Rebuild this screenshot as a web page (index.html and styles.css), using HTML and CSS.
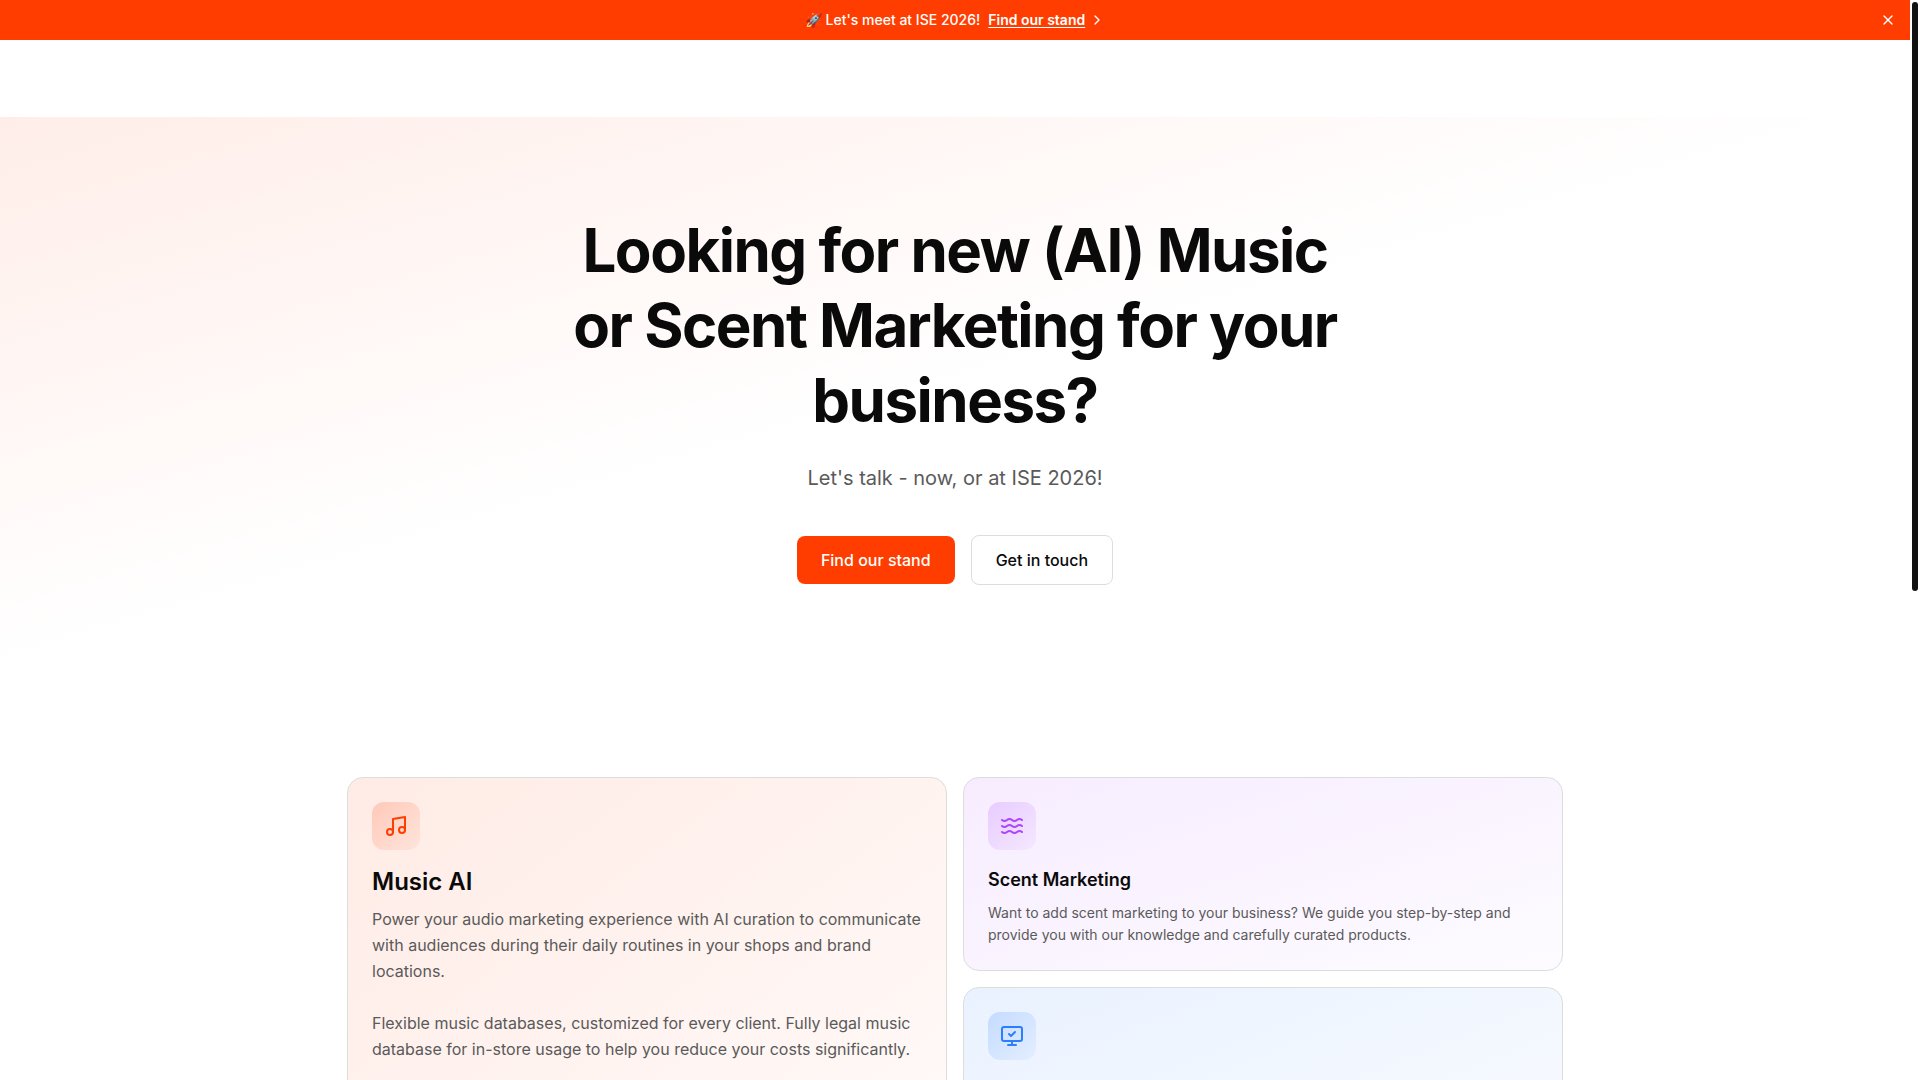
FILE: index.html
```html
<!DOCTYPE html>
<html lang="en">

<head>
    <meta charset="UTF-8">
    <meta name="viewport" content="width=device-width, initial-scale=1.0">
    <title>Music AI and Scent Marketing</title>
    <link rel="stylesheet" href="styles.css">
</head>

<body>
    <div class="page">
        <div class="banner">
            <p class="banner-text">
                <span>🚀 Let's meet at ISE 2026!</span>
                <a class="banner-link" href="#stand"><span class="banner-link-label">Find our stand</span><svg class="icon-small" viewBox="0 0 24 24" aria-hidden="true"><path d="m9 18 6-6-6-6" /></svg></a>
            </p>
            <button class="banner-close" type="button" aria-label="Close">
                <svg class="icon-small" viewBox="0 0 24 24" aria-hidden="true"><path d="M18 6 6 18" /><path d="m6 6 12 12" /></svg>
            </button>
        </div>

        <header class="header"></header>

        <main>
            <section class="hero">
                <h1 class="hero-title">Looking for new (AI) Music or Scent Marketing for your business?</h1>
                <p class="hero-text">Let's talk - now, or at ISE 2026!</p>
                <div class="hero-actions">
                    <a class="btn btn-primary" href="#stand">Find our stand</a>
                    <a class="btn btn-outline" href="#contact">Get in touch</a>
                </div>
            </section>

            <section class="services">
                <div class="container">
                    <article class="card card-large card-orange">
                        <div class="card-icon">
                            <svg class="icon" viewBox="0 0 24 24" aria-hidden="true">
                                <path d="M9 18V5l12-2v13" />
                                <circle cx="6" cy="18" r="3" />
                                <circle cx="18" cy="16" r="3" />
                            </svg>
                        </div>
                        <h2 class="card-title">Music AI</h2>
                        <div class="card-text">
                            <p>Power your audio marketing experience with AI curation to communicate with audiences during their daily routines in your shops and brand locations.</p>
                            <p>Flexible music databases, customized for every client. Fully legal music database for in-store usage to help you reduce your costs significantly.</p>
                        </div>
                    </article>

                    <article class="card card-purple">
                        <div class="card-icon">
                            <svg class="icon" viewBox="0 0 24 24" aria-hidden="true">
                                <path d="M2 6c.6.5 1.2 1 2.5 1C7 7 7 5 9.5 5c2.6 0 2.4 2 5 2 2.5 0 2.5-2 5-2 1.3 0 1.9.5 2.5 1" />
                                <path d="M2 12c.6.5 1.2 1 2.5 1 2.5 0 2.5-2 5-2 2.6 0 2.4 2 5 2 2.5 0 2.5-2 5-2 1.3 0 1.9.5 2.5 1" />
                                <path d="M2 18c.6.5 1.2 1 2.5 1 2.5 0 2.5-2 5-2 2.6 0 2.4 2 5 2 2.5 0 2.5-2 5-2 1.3 0 1.9.5 2.5 1" />
                            </svg>
                        </div>
                        <h2 class="card-title">Scent Marketing</h2>
                        <div class="card-text">
                            <p>Want to add scent marketing to your business? We guide you step-by-step and provide you with our knowledge and carefully curated products.</p>
                        </div>
                    </article>

                    <article class="card card-blue">
                        <div class="card-icon">
                            <svg class="icon" viewBox="0 0 24 24" aria-hidden="true">
                                <path d="m9 10 2 2 4-4" />
                                <rect width="20" height="14" x="2" y="3" rx="2" />
                                <path d="M12 17v4" />
                                <path d="M8 21h8" />
                            </svg>
                        </div>
                    </article>
                </div>
            </section>
        </main>
    </div>
    <div class="scrollbar" aria-hidden="true">
        <div class="scrollbar-thumb"></div>
    </div>
</body>

</html>
```
FILE: styles.css
```css
* {
    box-sizing: border-box;
}

body {
    display: flex;
    height: 100vh;
    margin: 0;
    overflow: hidden;
    font-family: Inter, sans-serif;
    font-size: 16px;
    color: #0a0a0a;
    background-color: #ffffff;
}

h1,
h2,
p {
    margin: 0;
}

a {
    color: inherit;
    text-decoration: none;
}

.page {
    flex: 1;
    min-width: 0;
}

/* Scrollbar */
.scrollbar {
    width: 10px;
    padding: 2px;
}

.scrollbar-thumb {
    height: 589px;
    border-radius: 3px;
    background-color: #111111;
}

/* Icons */
.icon,
.icon-small {
    display: block;
    width: 24px;
    height: 24px;
    fill: none;
    stroke: currentColor;
    stroke-width: 2;
    stroke-linecap: round;
    stroke-linejoin: round;
}

.icon-small {
    width: 16px;
    height: 16px;
}

/* Banner */
.banner {
    display: grid;
    grid-template-columns: 1fr auto 1fr;
    align-items: center;
    height: 40px;
    padding: 0 8px;
    color: #ffffff;
    background-color: #ff3d00;
}

.banner-text {
    display: flex;
    grid-column: 2;
    gap: 8px;
    font-size: 14px;
    font-weight: 500;
    line-height: 20px;
}

.banner-link {
    display: flex;
    align-items: center;
    gap: 4px;
    font-weight: 600;
}

.banner-link-label {
    text-decoration: underline;
    text-decoration-thickness: 1px;
    text-underline-offset: 2px;
}

.banner-close {
    justify-self: end;
    padding: 6px;
    border: 0;
    color: inherit;
    background: none;
    cursor: pointer;
}

.header {
    height: 77px;
}

/* Hero */
.hero {
    padding: 96px 32px;
    text-align: center;
    background-image: linear-gradient(to bottom right, rgba(255, 61, 0, 0.09), rgba(255, 61, 0, 0) 49%);
}

.hero-title {
    max-width: 768px;
    margin: 0 auto 24px;
    font-size: 60px;
    font-weight: 700;
    line-height: 75px;
    letter-spacing: -0.025em;
}

.hero-text {
    margin-bottom: 40px;
    font-size: 20px;
    line-height: 33px;
    color: #5a5a5a;
}

.hero-actions {
    display: flex;
    justify-content: center;
    align-items: center;
    gap: 16px;
}

.btn {
    padding: 12px 24px;
    border-radius: 8px;
    font-weight: 500;
    line-height: 24px;
}

.btn-primary {
    color: #ffffff;
    background-color: #ff3d00;
}

.btn-outline {
    border: 1px solid #dddddd;
    background-color: #ffffff;
}

/* Service cards */
.services {
    padding: 96px 32px;
}

.container {
    display: grid;
    grid-template-columns: repeat(2, 1fr);
    gap: 16px;
    max-width: 1216px;
    margin: 0 auto;
}

.card {
    padding: 24px;
    border: 1px solid #dddddd;
    border-radius: 16px;
}

.card-large {
    grid-row: span 2;
}

.card-icon {
    display: flex;
    justify-content: center;
    align-items: center;
    width: 48px;
    height: 48px;
    margin-bottom: 16px;
    border-radius: 12px;
}

.card-title {
    margin-bottom: 8px;
    font-size: 18px;
    font-weight: 600;
    line-height: 28px;
}

.card-text {
    font-size: 14px;
    line-height: 22px;
    color: #5a5a5a;
}

.card-large .card-title {
    font-size: 24px;
    line-height: 32px;
}

.card-large .card-text {
    font-size: 16px;
    line-height: 26px;
}

.card-text p + p {
    margin-top: 26px;
}

.card-orange {
    background-image: linear-gradient(to bottom right, rgba(255, 61, 0, 0.1), rgba(255, 61, 0, 0.02));
}

.card-orange .card-icon {
    color: #ff3d00;
    background-image: linear-gradient(to bottom right, rgba(255, 61, 0, 0.2), rgba(255, 61, 0, 0.05));
}

.card-purple {
    background-image: linear-gradient(to bottom right, rgba(173, 70, 255, 0.1), rgba(173, 70, 255, 0.02));
}

.card-purple .card-icon {
    color: #ad46ff;
    background-image: linear-gradient(to bottom right, rgba(173, 70, 255, 0.2), rgba(173, 70, 255, 0.05));
}

.card-blue {
    min-height: 240px;
    background-image: linear-gradient(to bottom right, rgba(43, 127, 255, 0.1), rgba(43, 127, 255, 0.02));
}

.card-blue .card-icon {
    color: #2b7fff;
    background-image: linear-gradient(to bottom right, rgba(43, 127, 255, 0.2), rgba(43, 127, 255, 0.05));
}
```
